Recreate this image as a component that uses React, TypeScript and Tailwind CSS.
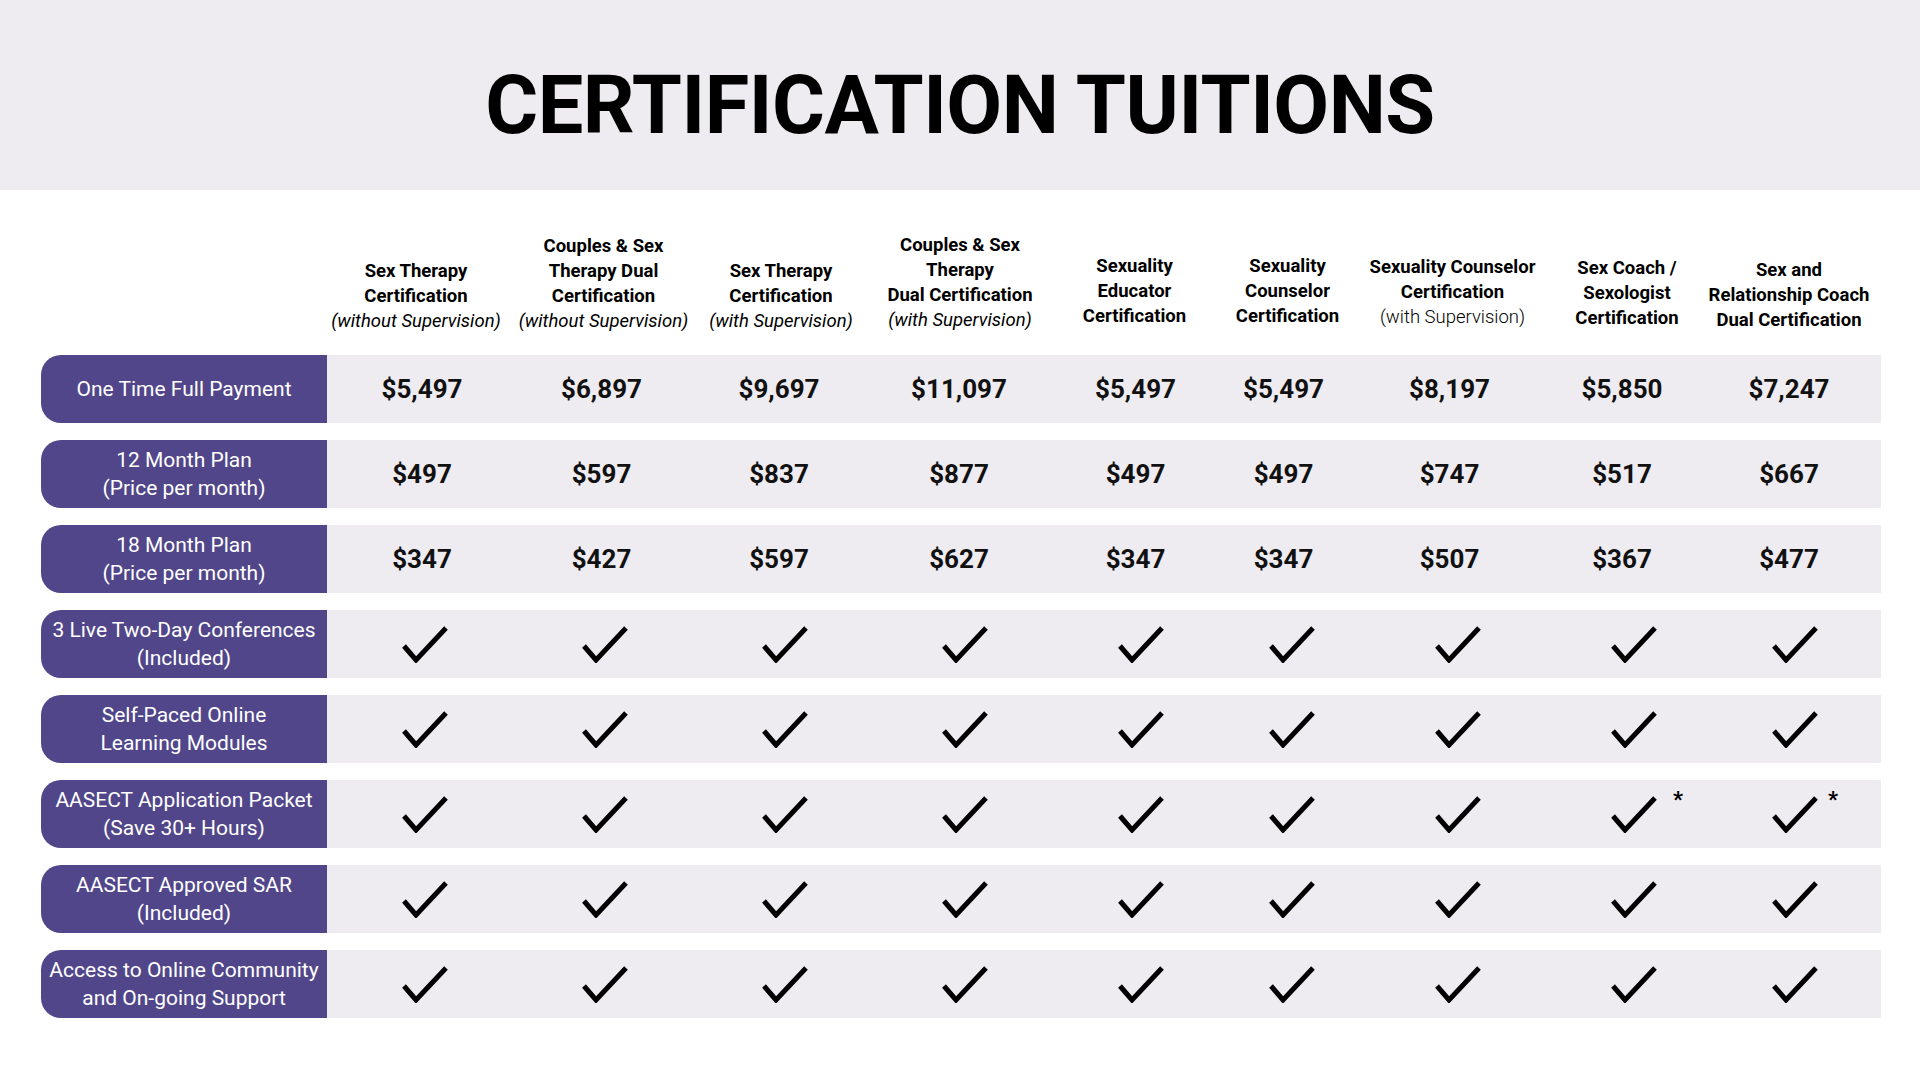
import React from 'react';

const cols = 'grid-cols-[286px_184px_179px_178px_178px_163px_157px_169px_170px_176px]';

type Head = { lines: string[]; note?: string; noteItalic?: boolean; pb?: string };

const heads: Head[] = [
  { lines: ['Sex Therapy', 'Certification'], note: '(without Supervision)', noteItalic: true },
  { lines: ['Couples & Sex', 'Therapy Dual', 'Certification'], note: '(without Supervision)', noteItalic: true },
  { lines: ['Sex Therapy', 'Certification'], note: '(with Supervision)', noteItalic: true },
  { lines: ['Couples & Sex', 'Therapy', 'Dual Certification'], note: '(with Supervision)', noteItalic: true, pb: 'pb-[1px]' },
  { lines: ['Sexuality', 'Educator', 'Certification'], pb: 'pb-[5px]' },
  { lines: ['Sexuality', 'Counselor', 'Certification'], pb: 'pb-[5px]' },
  { lines: ['Sexuality Counselor', 'Certification'], note: '(with Supervision)', noteItalic: false, pb: 'pb-[4px]' },
  { lines: ['Sex Coach /', 'Sexologist', 'Certification'], pb: 'pb-[3px]' },
  { lines: ['Sex and', 'Relationship Coach', 'Dual Certification'], pb: 'pb-[1px]' },
];

// small per-column nudges so the content sits where the design put it
const headShift = ['-translate-x-[3px]', 'translate-x-[3px]', 'translate-x-[2px]', 'translate-x-[3px]', 'translate-x-[7px]', '', 'translate-x-[2px]', 'translate-x-[7px]', '-translate-x-[4px]'];
const priceShift = ['translate-x-[3px]', 'translate-x-[1px]', '', 'translate-x-[2px]', 'translate-x-[8px]', '-translate-x-[4px]', '-translate-x-[1px]', 'translate-x-[2px]', '-translate-x-[4px]'];
const checkShift = ['translate-x-[6px]', 'translate-x-[4px]', 'translate-x-[6px]', 'translate-x-[8px]', 'translate-x-[13px]', 'translate-x-[4px]', 'translate-x-[7px]', 'translate-x-[14px]', 'translate-x-[2px]'];

type Row = { label: string[]; prices?: string[]; star?: number[] };

const rows: Row[] = [
  { label: ['One Time Full Payment'], prices: ['$5,497', '$6,897', '$9,697', '$11,097', '$5,497', '$5,497', '$8,197', '$5,850', '$7,247'] },
  { label: ['12 Month Plan', '(Price per month)'], prices: ['$497', '$597', '$837', '$877', '$497', '$497', '$747', '$517', '$667'] },
  { label: ['18 Month Plan', '(Price per month)'], prices: ['$347', '$427', '$597', '$627', '$347', '$347', '$507', '$367', '$477'] },
  { label: ['3 Live Two-Day Conferences', '(Included)'] },
  { label: ['Self-Paced Online', 'Learning Modules'] },
  { label: ['AASECT Application Packet', '(Save 30+ Hours)'], star: [7, 8] },
  { label: ['AASECT Approved SAR', '(Included)'] },
  { label: ['Access to Online Community', 'and On-going Support'] },
];

const Check = ({ star, starPos, shift }: { star?: boolean; starPos?: string; shift: string }) => (
  <div className={`relative ${shift}`}>
    <svg width="46" height="37" viewBox="0 0 46 37" fill="none">
      <polyline points="2,20 14,34 44,2" stroke="#000" strokeWidth="5" strokeLinecap="butt" strokeLinejoin="miter" />
    </svg>
    {star && (
      <span className={`absolute ${starPos} top-[-7px] text-[22px] font-bold leading-none text-black`}>*</span>
    )}
  </div>
);

export default function App() {
  return (
    <div className="w-[1920px] min-h-[1080px] bg-white font-['Roboto','Liberation_Sans',sans-serif] text-black">
      <div className="h-[190px] bg-[#eeecf1] flex items-center justify-center pt-[20px]">
        <h1 className="text-[81px] font-bold leading-none tracking-[-0.5px]">CERTIFICATION TUITIONS</h1>
      </div>

      <div className="pl-[41px]">
        <div className={`grid ${cols} h-[165px] items-end pb-[21px]`}>
          <div />
          {heads.map((h, i) => (
            <div key={i} className={`text-center text-[18.5px] leading-[25px] ${h.pb ?? ''} ${headShift[i]}`}>
              {h.lines.map((l, j) => (
                <div key={j} className="font-bold">{l}</div>
              ))}
              {h.note && (
                <div className={h.noteItalic ? 'italic font-normal' : 'font-light'}>{h.note}</div>
              )}
            </div>
          ))}
        </div>

        <div className="flex flex-col gap-[17px]">
          {rows.map((r, i) => (
            <div key={i} className={`grid ${cols} h-[68px]`}>
              <div className="bg-[#51468a] rounded-l-[20px] flex flex-col items-center justify-center text-white text-[21px] leading-[28px] text-center whitespace-nowrap">
                {r.label.map((l, j) => (
                  <div key={j}>{l}</div>
                ))}
              </div>
              {Array.from({ length: 9 }).map((_, c) => (
                <div key={c} className="bg-[#eeecf1] flex items-center justify-center">
                  {r.prices ? (
                    <span className={`text-[26px] font-bold text-[#111] ${priceShift[c]}`}>{r.prices[c]}</span>
                  ) : (
                    <Check
                      shift={checkShift[c]}
                      star={r.star?.includes(c)}
                      starPos={c === 7 ? 'left-[62px]' : 'left-[56px]'}
                    />
                  )}
                </div>
              ))}
            </div>
          ))}
        </div>
      </div>
    </div>
  );
}
